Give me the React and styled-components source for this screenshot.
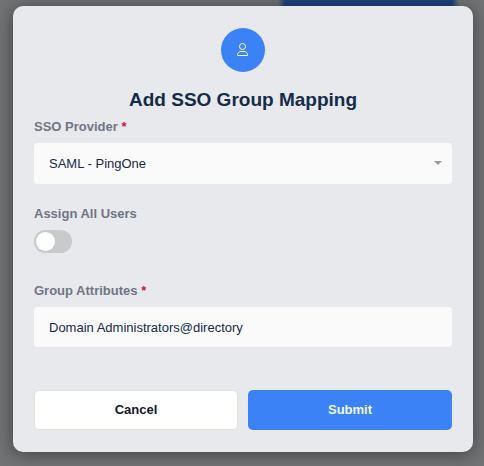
import React, { useState } from "react";
import styled, { createGlobalStyle } from "styled-components";

const providers = ["SAML - PingOne", "SAML - Okta", "OpenID Connect"];

function UserIcon() {
  return (
    <svg
      width="12"
      height="14"
      viewBox="0 0 12 14"
      fill="none"
      stroke="#ffffff"
      aria-hidden="true"
    >
      <circle cx="5.5" cy="3.5" r="3" />
      <path d="M4 8.5h3c2.2 0 3.5 1.4 3.5 3.2v.8H.5v-.8c0-1.8 1.300-3.200 3.500-3.200z" />
    </svg>
  );
}

function App() {
  const [provider, setProvider] = useState(providers[0]);
  const [assignAll, setAssignAll] = useState(false);
  const [attributes, setAttributes] = useState(
    "Domain Administrators@directory"
  );

  return (
    <>
      <GlobalStyle />
      <Backdrop>
        <Modal role="dialog" aria-labelledby="modal-title">
          <IconCircle>
            <UserIcon />
          </IconCircle>
          <Title id="modal-title">Add SSO Group Mapping</Title>
          <Form onSubmit={(event) => event.preventDefault()}>
            <Field>
              <Label htmlFor="provider">
                SSO Provider <Required>*</Required>
              </Label>
              <SelectWrap>
                <Select
                  id="provider"
                  value={provider}
                  onChange={(event) => setProvider(event.target.value)}
                >
                  {providers.map((name) => (
                    <option key={name}>{name}</option>
                  ))}
                </Select>
                <Arrow viewBox="0 0 8 4" aria-hidden="true">
                  <path d="M0 0h8L4 4z" fill="#9b9ca2" />
                </Arrow>
              </SelectWrap>
            </Field>
            <Field>
              <Label htmlFor="assign-all">Assign All Users</Label>
              <Toggle
                id="assign-all"
                type="checkbox"
                role="switch"
                checked={assignAll}
                onChange={(event) => setAssignAll(event.target.checked)}
              />
            </Field>
            <AttributesField>
              <Label htmlFor="attributes">
                Group Attributes <Required>*</Required>
              </Label>
              <Input
                id="attributes"
                type="text"
                value={attributes}
                onChange={(event) => setAttributes(event.target.value)}
              />
            </AttributesField>
            <Actions>
              <CancelButton type="button">Cancel</CancelButton>
              <SubmitButton type="submit">Submit</SubmitButton>
            </Actions>
          </Form>
        </Modal>
      </Backdrop>
    </>
  );
}

const GlobalStyle = createGlobalStyle`
  *, *::before, *::after {
    box-sizing: border-box;
  }

  body {
    margin: 0;

    font-family: "Liberation Sans", Arial, sans-serif;
    font-size: 13px;
    line-height: 16px;
    color: #152c49;
  }
`;

const Backdrop = styled.div`
  min-height: 100vh;
  padding: 6px 11px 14px 13px;

  background-color: #727375;
  background-image: linear-gradient(
    to right,
    transparent,
    #20427c 7px,
    #20427c calc(100% - 7px),
    transparent
  );
  background-position: right 25px top;
  background-size: 181px 8px;
  background-repeat: no-repeat;
`;

const Modal = styled.main`
  display: flex;
  flex-direction: column;
  align-items: center;

  padding: 22px 21px;
  border-radius: 10px;

  background: #e7e9ed;
  box-shadow: 0 2px 18px rgba(0, 0, 0, 0.45);
`;

const IconCircle = styled.div`
  display: flex;
  align-items: center;
  justify-content: center;

  width: 44px;
  height: 44px;
  border-radius: 50%;

  background: #3b82f6;
`;

const Title = styled.h1`
  margin: 16px 0 7px;

  font-size: 19px;
  line-height: 24px;
`;

const Form = styled.form`
  display: flex;
  flex-direction: column;
  gap: 22px;

  width: 100%;
`;

const Field = styled.div`
  display: flex;
  flex-direction: column;
  align-items: flex-start;
  gap: 8px;
`;

const AttributesField = styled(Field)`
  margin-top: 8px;
`;

const Label = styled.label`
  font-weight: bold;
  color: #717584;
`;

const Required = styled.span`
  color: #c2184b;
`;

const SelectWrap = styled.div`
  position: relative;

  width: 100%;
`;

const Input = styled.input`
  display: block;

  width: 100%;
  height: 40px;
  padding: 0 15px;
  border: 0;
  border-radius: 4px;

  background: #fafafa;
  font: inherit;
  color: inherit;
`;

const Select = styled(Input).attrs({ as: "select" })`
  height: 41px;

  appearance: none;
`;

const Arrow = styled.svg`
  position: absolute;
  top: 18px;
  right: 10px;

  width: 8px;
  height: 4px;

  pointer-events: none;
`;

const Toggle = styled.input`
  width: 38px;
  height: 23px;
  margin: 0;
  padding: 2px;
  border-radius: 12px;

  appearance: none;
  background: #c9cacc;
  cursor: pointer;

  &::before {
    content: "";
    display: block;

    width: 19px;
    height: 19px;
    border-radius: 50%;

    background: #ffffff;
  }

  &:checked {
    background: #3b82f6;
  }

  &:checked::before {
    margin-left: auto;
  }
`;

const Actions = styled.div`
  display: grid;
  grid-template-columns: 1fr 1fr;
  gap: 10px;

  margin-top: 21px;
`;

const Button = styled.button`
  height: 40px;
  border: 0;
  border-radius: 5px;

  font: inherit;
  font-weight: bold;
  cursor: pointer;
`;

const CancelButton = styled(Button)`
  border: 1px solid #e0e2e6;

  background: #ffffff;
  color: #111827;
`;

const SubmitButton = styled(Button)`
  background: #3b82f6;
  color: #f4f8ff;
`;

export default App;
